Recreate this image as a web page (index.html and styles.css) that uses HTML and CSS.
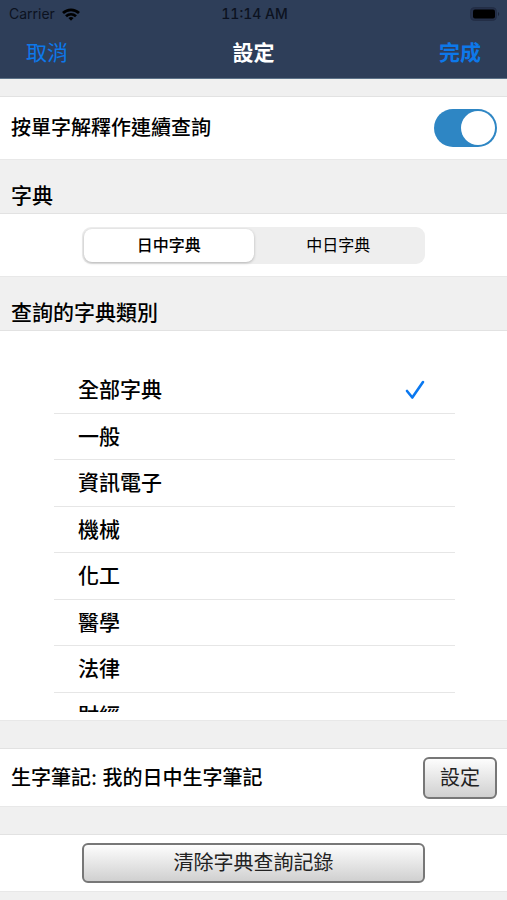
FILE: index.html
```html
<!DOCTYPE html>
<html lang="zh-Hant">
<head>
  <meta charset="UTF-8">
  <meta name="viewport" content="width=device-width, initial-scale=1.0">
  <title>設定</title>
  <link rel="stylesheet" href="styles.css">
</head>
<body>
  <header class="header">
    <div class="status-bar">
      <div class="carrier">
        <span>Carrier</span>
        <svg width="18" height="13" viewBox="0 0 18 13" fill="none" stroke="#000" stroke-width="2.8">
          <path d="M1 5 C5.5 0.8 12.5 0.8 17 5"/>
          <path d="M4 8.3 C7 5.6 11 5.6 14 8.3"/>
          <path d="M6.4 10 C8 8.7 10 8.7 11.6 10 L9 12.8 Z" fill="#000" stroke="none"/>
        </svg>
      </div>
      <span class="time">11:14 AM</span>
      <svg class="battery" width="30" height="14" viewBox="0 0 30 14">
        <rect x="0.5" y="0.5" width="26" height="13" rx="4" fill="#25304a" stroke="#232e46"/>
        <rect x="3" y="2.5" width="22" height="9" rx="2" fill="#000"/>
        <path d="M28 5 C29.6 5.6 29.6 8.4 28 9 Z" fill="#1c263a"/>
      </svg>
    </div>
    <nav class="nav-bar">
      <button type="button" class="nav-button">取消</button>
      <h1>設定</h1>
      <button type="button" class="nav-button done">完成</button>
    </nav>
  </header>

  <main>
    <section class="panel row">
      <label for="continuous">按單字解釋作連續查詢</label>
      <input type="checkbox" role="switch" id="continuous" class="switch" checked>
    </section>

    <h2>字典</h2>
    <section class="panel center-row">
      <div class="segmented">
        <label class="segment"><input type="radio" name="dictionary" checked><span>日中字典</span></label>
        <label class="segment"><input type="radio" name="dictionary"><span>中日字典</span></label>
      </div>
    </section>

    <h2>查詢的字典類別</h2>
    <section class="panel categories">
      <div class="list">
        <label class="item"><span>全部字典</span><input type="radio" name="category" checked>
          <svg class="check" width="20" height="20" viewBox="0 0 20 20" fill="none" stroke="#0a78f0" stroke-width="2.6" stroke-linecap="round" stroke-linejoin="round">
            <path d="M2 11 L7.3 17.5 L18 2"/>
          </svg>
        </label>
        <label class="item"><span>一般</span><input type="radio" name="category"></label>
        <label class="item"><span>資訊電子</span><input type="radio" name="category"></label>
        <label class="item"><span>機械</span><input type="radio" name="category"></label>
        <label class="item"><span>化工</span><input type="radio" name="category"></label>
        <label class="item"><span>醫學</span><input type="radio" name="category"></label>
        <label class="item"><span>法律</span><input type="radio" name="category"></label>
        <label class="item"><span>財經</span><input type="radio" name="category"></label>
      </div>
    </section>

    <section class="panel row notes">
      <span>生字筆記: 我的日中生字筆記</span>
      <button type="button" class="button">設定</button>
    </section>

    <section class="panel center-row clear">
      <button type="button" class="button wide">清除字典查詢記錄</button>
    </section>
  </main>
</body>
</html>
```
FILE: styles.css
```css
* {
  box-sizing: border-box;
}

body {
  margin: 0;
  background: #f0f0f0;
  color: #000;
  font-family: Inter, "Noto Sans CJK TC", sans-serif;
  font-size: 20px;
  font-weight: 500;
  line-height: 28px;
}

button,
input {
  font: inherit;
  margin: 0;
}

.header {
  background: #2e3e59;
  border-bottom: 1px solid #5c7288;
}

.status-bar {
  display: grid;
  grid-template-columns: 1fr auto 1fr;
  align-items: center;
  height: 28px;
  padding: 0 7px 0 9px;
  font-size: 14px;
  color: #0c1220;
}

.carrier {
  display: flex;
  align-items: center;
  gap: 7px;
  font-weight: 400;
}

.time {
  font-variant-numeric: tabular-nums;
}

.battery {
  justify-self: end;
}

.nav-bar {
  display: flex;
  align-items: center;
  justify-content: space-between;
  height: 50px;
  padding: 0 26px;
}

.nav-button {
  padding: 0;
  border: 0;
  background: none;
  color: #0d78ea;
  font-size: 21px;
  font-weight: 400;
}

.done {
  font-weight: 700;
}

h1 {
  margin: 0;
  color: #fff;
  font-size: 21px;
  font-weight: 700;
}

h2 {
  margin: 0;
  padding: 22px 11px 3px;
  font-size: 21px;
  font-weight: 500;
}

.panel {
  background: #fff;
  border-top: 1px solid #e2e2e2;
  border-bottom: 1px solid #e8e8e8;
}

.row {
  display: flex;
  align-items: center;
  justify-content: space-between;
  height: 64px;
  margin-top: 17px;
  padding: 0 10px 0 11px;
}

.center-row {
  display: flex;
  justify-content: center;
  align-items: center;
  height: 64px;
  padding: 0 82px;
}

.switch {
  appearance: none;
  display: flex;
  width: 63px;
  height: 38px;
  padding: 2px;
  border-radius: 19px;
  background: #ccc;
}

.switch::before {
  content: "";
  width: 34px;
  height: 34px;
  border-radius: 50%;
  background: #fff;
}

.switch:checked {
  justify-content: flex-end;
  background: #2e86c4;
}

.segmented {
  flex: 1;
  display: flex;
  height: 37px;
  padding: 2px;
  border-radius: 9px;
  background: #eee;
}

.segment {
  flex: 1;
  display: flex;
  font-size: 16px;
  font-weight: 400;
}

.segment input,
.item input {
  appearance: none;
  width: 0;
}

.segment span {
  flex: 1;
  display: flex;
  align-items: center;
  justify-content: center;
  border-radius: 8px;
}

.segment input:checked + span {
  background: #fff;
  box-shadow: 0 1px 3px rgba(0, 0, 0, 0.25);
  font-weight: 500;
}

.categories {
  padding: 36px 52px 8px 54px;
}

/* shows seven rows and the top of the next one */
.list {
  display: grid;
  grid-auto-rows: 47px 46px;
  height: 345px;
  overflow-y: auto;
  scrollbar-width: none;
}

.item {
  display: flex;
  align-items: center;
  justify-content: space-between;
  padding: 0 30px 0 24px;
  border-bottom: 1px solid #e6e6e6;
  font-size: 21px;
}

.item input:not(:checked) ~ .check {
  display: none;
}

.notes {
  height: 59px;
  margin-top: 27px;
}

.button {
  height: 42px;
  padding: 0 15px;
  border: 2px solid #777;
  border-radius: 6px;
  background: linear-gradient(#fdfdfd, #d0d0d0);
  color: #222;
  font-weight: 400;
}

.wide {
  flex: 1;
  height: 40px;
}

.clear {
  height: 58px;
  margin-top: 27px;
}
```
